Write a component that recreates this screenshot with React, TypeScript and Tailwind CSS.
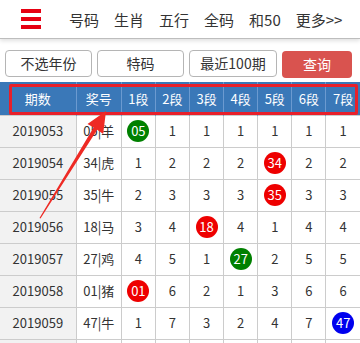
import React from 'react';

type Cell = number | { ball: string; color: string };

interface Row {
  issue: string;
  code: string;
  cells: Cell[];
}

const GREEN = 'bg-[#008000]';
const RED = 'bg-[#ee0000]';
const BLUE = 'bg-[#0000ee]';

const rows: Row[] = [
  { issue: '2019053', code: '05|羊', cells: [{ ball: '05', color: GREEN }, 1, 1, 1, 1, 1, 1] },
  { issue: '2019054', code: '34|虎', cells: [1, 2, 2, 2, { ball: '34', color: RED }, 2, 2] },
  { issue: '2019055', code: '35|牛', cells: [2, 3, 3, 3, { ball: '35', color: RED }, 3, 3] },
  { issue: '2019056', code: '18|马', cells: [3, 4, { ball: '18', color: RED }, 4, 1, 4, 4] },
  { issue: '2019057', code: '27|鸡', cells: [4, 5, 1, { ball: '27', color: GREEN }, 2, 5, 5] },
  { issue: '2019058', code: '01|猪', cells: [{ ball: '01', color: RED }, 6, 2, 1, 3, 6, 6] },
  { issue: '2019059', code: '47|牛', cells: [1, 7, 3, 2, 4, 7, { ball: '47', color: BLUE }] },
];

const navItems = ['号码', '生肖', '五行', '全码', '和50', '更多>>'];
const segs = ['1段', '2段', '3段', '4段', '5段', '6段', '7段'];

export default function App() {
  return (
    <div
      className="relative w-[360px] h-[343px] overflow-hidden bg-white text-[#333]"
      style={{ fontFamily: '"Noto Sans CJK SC", "Noto Sans", sans-serif' }}
    >
      {/* top nav */}
      <div className="h-[39px] flex items-center border-b border-[#bdbdbd] shadow-[0_2px_4px_rgba(0,0,0,0.12)]">
        <div className="ml-[21px] w-[20px] flex flex-col gap-[4px]">
          <span className="block h-[4px] bg-[#e60012]" />
          <span className="block h-[4px] bg-[#e60012]" />
          <span className="block h-[4px] bg-[#e60012]" />
        </div>
        <nav className="ml-[28px] flex gap-[15px] text-[15px] leading-none">
          {navItems.map(n => (
            <span key={n}>{n}</span>
          ))}
        </nav>
      </div>

      {/* filters */}
      <div className="flex gap-[5px] pl-[5px] pt-[11px] h-[43px]">
        <button className="w-[87px] h-[27px] border border-[#b5b5b5] rounded-[4px] bg-white text-[14px]">不选年份</button>
        <button className="w-[87px] h-[27px] border border-[#b5b5b5] rounded-[4px] bg-white text-[14px]">特码</button>
        <button className="w-[88px] h-[27px] border border-[#b5b5b5] rounded-[4px] bg-white text-[14px]">最近100期</button>
        <button className="w-[70px] h-[27px] rounded-[4px] bg-[#d9534f] text-white text-[14px] mt-[1px]">查询</button>
      </div>

      {/* table */}
      <table className="table-fixed border-collapse w-[360px] text-[13px] text-center">
        <colgroup>
          <col className="w-[76px]" />
          <col className="w-[45px]" />
          {segs.map(s => (
            <col key={s} className="w-[34px]" />
          ))}
        </colgroup>
        <thead>
          <tr className="h-[33px] bg-[#3a78b8] text-white">
            <th className="font-normal border-r border-[#6b9ad0]">期数</th>
            <th className="font-normal border-r border-[#6b9ad0]">奖号</th>
            {segs.map(s => (
              <th key={s} className="font-normal border-r border-[#6b9ad0] last:border-r-0">{s}</th>
            ))}
          </tr>
        </thead>
        <tbody>
          {rows.map(r => (
            <tr key={r.issue} className="h-[32px]">
              <td className="bg-[#f2f2f2] border border-l-0 border-[#cccccc]">{r.issue}</td>
              <td className="border border-[#cccccc]">{r.code}</td>
              {r.cells.map((c, i) => (
                <td key={i} className="border border-[#cccccc] last:border-r-0">
                  {typeof c === 'number' ? (
                    c
                  ) : (
                    <span className={`inline-flex items-center justify-center w-[22px] h-[22px] rounded-full text-white ${c.color}`}>
                      {c.ball}
                    </span>
                  )}
                </td>
              ))}
            </tr>
          ))}
          {/* next row, scrolled below the fold */}
          <tr className="h-[32px]">
            <td className="bg-[#f2f2f2] border border-l-0 border-[#cccccc]" />
            <td className="border border-[#cccccc]" />
            {segs.map(s => (
              <td key={s} className="border border-[#cccccc] last:border-r-0" />
            ))}
          </tr>
        </tbody>
      </table>

      {/* annotation overlay */}
      <div className="absolute left-[9px] top-[84px] w-[349px] h-[31px] border-[3px] border-[#e8202a] rounded-[2px] pointer-events-none" />
      <svg className="absolute left-0 top-0 pointer-events-none" width="360" height="343">
        <polygon
          points="106,111 87.5,124 93.6,127.5 39.5,218 40.5,218.5 97.2,129.8 103.2,134"
          fill="#ee2a24"
        />
      </svg>
    </div>
  );
}
